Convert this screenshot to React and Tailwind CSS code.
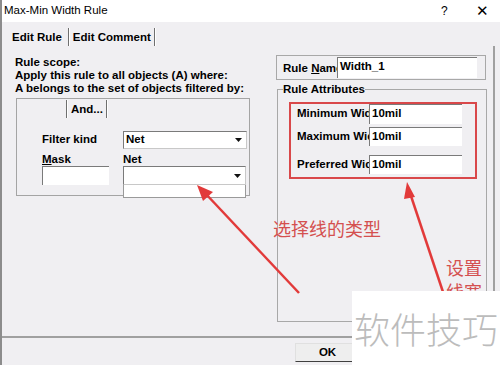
const ui = "font-['Liberation_Sans',Arial,sans-serif]";
const cjk = "font-['Noto_Sans_CJK_SC','Noto_Sans',sans-serif]";

const Arrow = () => (
  <svg width="7" height="4" viewBox="0 0 7 4" className="block">
    <path d="M0 0h7L3.5 4z" fill="#111" />
  </svg>
);

const Field = ({ text, w, h, className = "" }) => (
  <div className={`bg-white border-t border-l border-[#7a7a7a] ${className}`} style={{ width: w, height: h }}>
    <span className="block pl-[2px] leading-[17px]">{text}</span>
  </div>
);

const Combo = ({ text, w, h }) => (
  <div className="flex items-center bg-white border border-[#7a7a7a] border-r-[#c8c8c8] border-b-[#c8c8c8]" style={{ width: w, height: h }}>
    <span className="flex-1 pl-[2px]">{text}</span>
    <span className="pr-[4px]"><Arrow /></span>
  </div>
);

const Sep = () => (
  <div className="flex h-full">
    <div className="w-px h-full bg-[#6f6f6f]" />
    <div className="w-px h-full bg-white" />
  </div>
);

function LeftPane() {
  return (
    <div className="w-[274px] pl-[13px] pt-[10px]">
      <div className="leading-[13px]">Rule scope:</div>
      <div className="leading-[13px]">Apply this rule to all objects (A) where:</div>
      <div className="leading-[13px]">A belongs to the set of objects filtered by:</div>
      <div className="ml-px mt-[3px] w-[234px] h-[98px] border border-[#a4a4a4]">
        <div className="flex h-[18px] mt-px">
          <div className="w-[49px]" />
          <Sep />
          <div className="px-[3px] leading-[18px]">And...</div>
          <Sep />
        </div>
        <div className="flex items-center mt-[13px] pl-[25px] h-[18px]">
          <div className="w-[81px]">Filter kind</div>
          <Combo text="Net" w={124} h={18} />
        </div>
        <div className="flex mt-[3px] pl-[25px] h-[14px] leading-[14px]">
          <div className="w-[81px]"><u>M</u>ask</div>
          <div>Net</div>
        </div>
        <div className="flex pl-[25px]">
          <Field w={67} h={19} className="mr-[14px]" />
          <div className="relative">
            <Combo text="" w={123} h={19} />
            <div className="absolute left-0 top-full w-[123px] h-[13px] bg-white border border-t-0 border-[#9a9a9a]" />
          </div>
        </div>
      </div>
    </div>
  );
}

const AttrRow = ({ label, h, className = "" }) => (
  <div className={`flex items-center ${className}`}>
    <div className="w-[78px] pl-[6px] overflow-hidden whitespace-nowrap">{label}</div>
    <Field text="10mil" w={93} h={h} />
  </div>
);

function RightPane() {
  return (
    <div className="pt-[9px]">
      <div className="flex w-[210px] h-[25px] border border-[#a8a8a8] pt-px">
        <div className="w-[60px] pl-[6px] overflow-hidden whitespace-nowrap leading-[23px]">Rule <u>N</u>ame</div>
        <Field text="Width_1" w={140} h={21} />
      </div>
      <fieldset className="ml-px mt-[3px] w-[210px] h-[239px] border border-[#a8a8a8]">
        <legend className="ml-[5px] leading-[13px]">Rule Attributes</legend>
        <div className="ml-[11px] mt-[6px] w-[188px] h-[77px] border-2 border-[#d9484a]">
          <AttrRow label="Minimum Width" h={20} />
          <AttrRow label="Maximum Width" h={19} className="mt-[3px]" />
          <AttrRow label="Preferred Width" h={19} className="mt-[9px]" />
        </div>
      </fieldset>
    </div>
  );
}

export default function App() {
  return (
    <div className={`relative w-[500px] h-[365px] overflow-hidden bg-[#f0eff2] border-l-2 border-[#8c8c8c] text-black ${ui}`}>
      <div className="flex items-center h-[22px] bg-white pl-[2px] text-[11.5px]">
        <span className="flex-1">Max-Min Width Rule</span>
        <span className="w-[35px] text-[12px]">?</span>
        <span className="w-[24px] text-[15px] font-light">✕</span>
      </div>

      <div className="text-[11.5px] font-bold">
        <div className="flex h-[18px] mt-[6px] pl-[10px] leading-[18px]">
          <div className="pr-[6px]">Edit Rule</div>
          <Sep />
          <div className="px-[3px]">Edit Comment</div>
          <Sep />
        </div>

        <div className="flex w-[493px] h-[292px] border-r-2 border-b-2 border-[#a0a0a0]">
          <LeftPane />
          <RightPane />
        </div>

        <div className="ml-[293px] mt-[5px] w-[65px] h-[19px] flex items-center justify-center border border-[#e0e0e0] border-r-[#404040] border-b-[#404040] bg-[#eeeeee]">
          OK
        </div>
      </div>

      <svg className="absolute inset-0 pointer-events-none" width="500" height="365">
        <line x1="297" y1="293" x2="203" y2="193" stroke="#e23a3a" strokeWidth="2.5" />
        <polygon points="195,185 211,192 201,201" fill="#e23a3a" />
        <line x1="441" y1="292" x2="408" y2="193" stroke="#e23a3a" strokeWidth="2.5" />
        <polygon points="405,182 413,197 402,199" fill="#e23a3a" />
      </svg>

      <div className={`absolute left-[271px] top-[217px] text-[18px] leading-[22px] text-[#d4504f] ${cjk}`}>选择线的类型</div>
      <div className={`absolute left-[444px] top-[255px] text-[18px] leading-[24px] text-[#d4504f] ${cjk}`}>
        <div>设置</div>
        <div>线宽</div>
      </div>

      <div className={`absolute left-[350px] top-[291px] w-[150px] h-[74px] bg-white flex items-center pl-[2px] text-[36px] font-light text-[#bcbcbc] ${cjk}`}>
        软件技巧
      </div>
    </div>
  );
}
